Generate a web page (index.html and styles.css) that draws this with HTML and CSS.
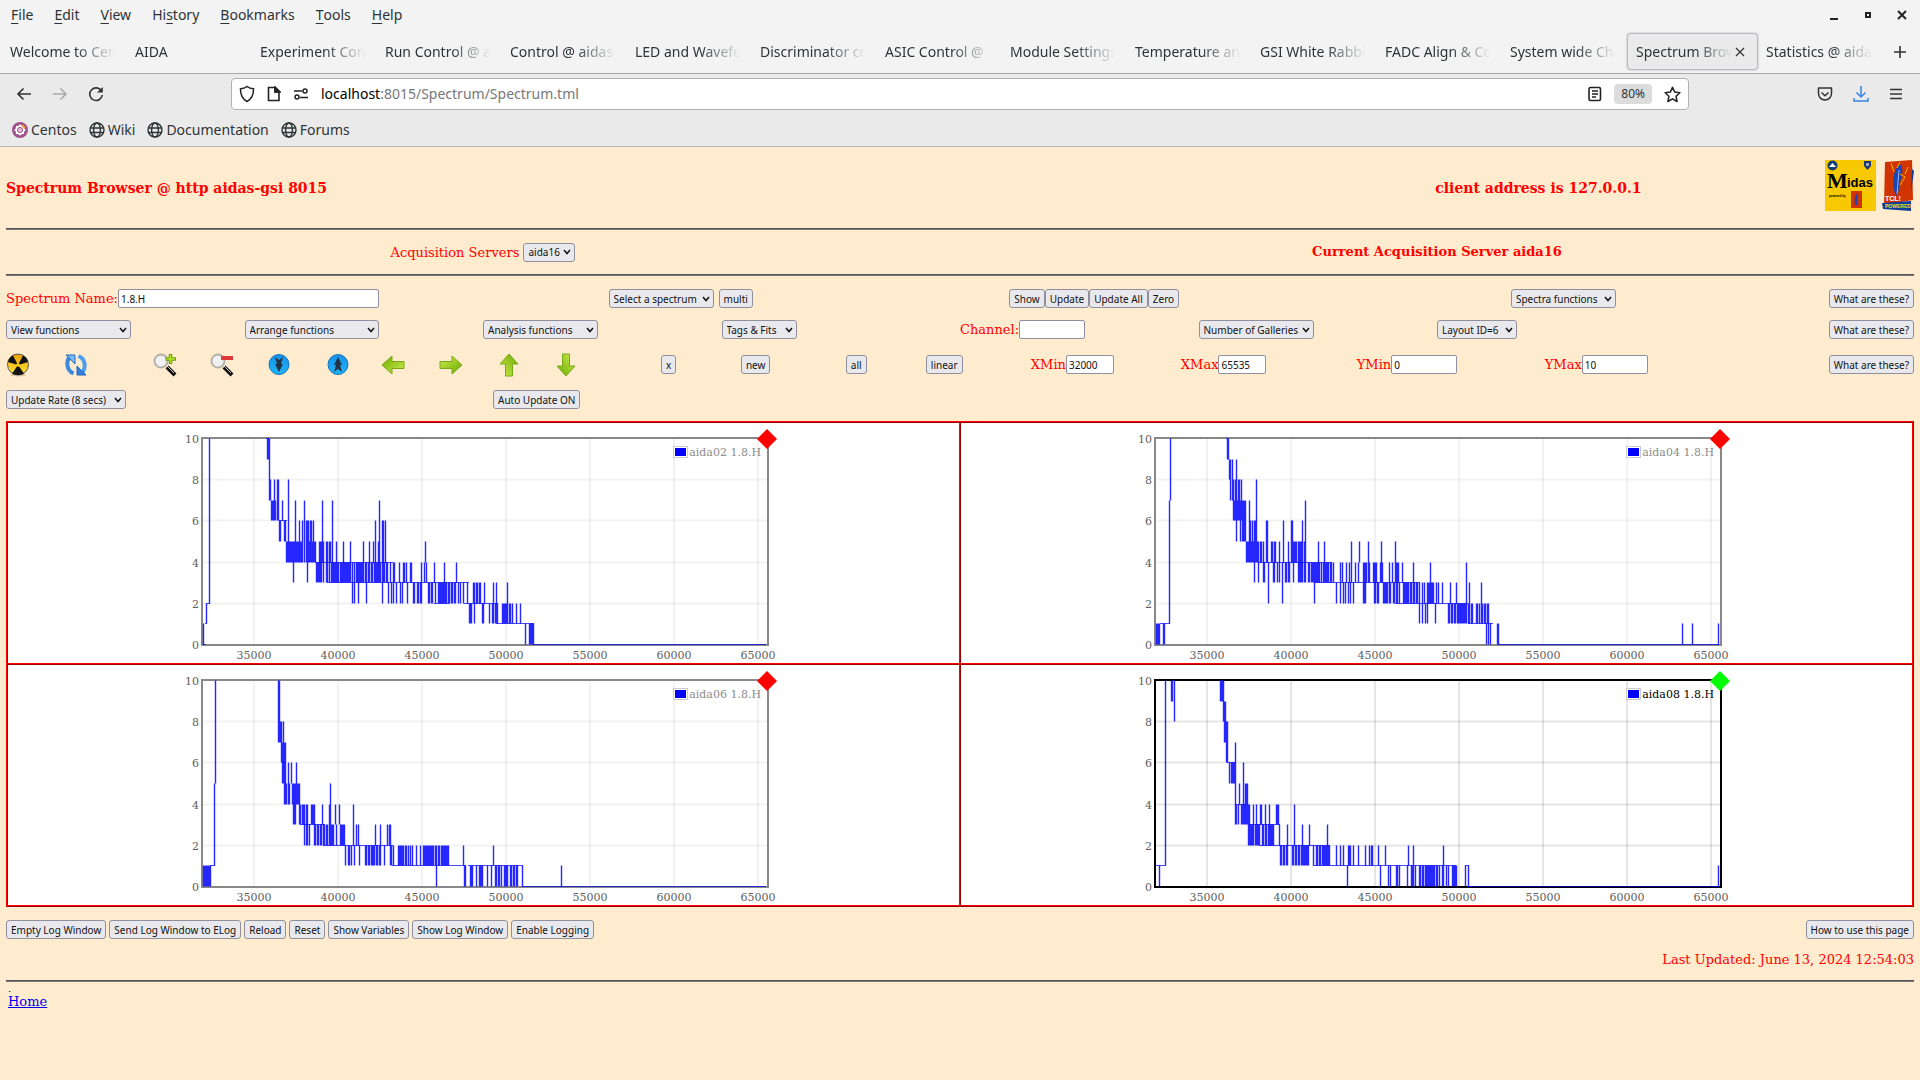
FILE: index.html
```html
<!DOCTYPE html>
<html lang="en">
<head>
<meta charset="utf-8">
<title>Spectrum Browser</title>
<link rel="stylesheet" href="styles.css">
</head>
<body>
<header class="chrome">
  <div class="menubar">
    <nav class="menus">
      <button><u>F</u>ile</button><button><u>E</u>dit</button><button><u>V</u>iew</button><button>Hi<u>s</u>tory</button><button><u>B</u>ookmarks</button><button><u>T</u>ools</button><button><u>H</u>elp</button>
    </nav>
    <div class="wincontrols">
      <button aria-label="Minimize"><svg width="10" height="10"><path d="M1 9h8" stroke="#222" stroke-width="2"/></svg></button>
      <button aria-label="Maximize"><svg width="10" height="10"><rect x="3" y="3" width="4" height="4" fill="none" stroke="#222" stroke-width="2"/></svg></button>
      <button aria-label="Close"><svg width="10" height="10"><path d="M1 1l8 8M9 1l-8 8" stroke="#222" stroke-width="2"/></svg></button>
    </div>
  </div>
  <div class="tabstrip">
    <div class="tabs">
      <button class="tab"><span>Welcome to Cen</span></button>
      <button class="tab"><span>AIDA</span></button>
      <button class="tab"><span>Experiment Cont</span></button>
      <button class="tab"><span>Run Control @ a</span></button>
      <button class="tab"><span>Control @ aidas-</span></button>
      <button class="tab"><span>LED and Wavefo</span></button>
      <button class="tab"><span>Discriminator co</span></button>
      <button class="tab"><span>ASIC Control @</span></button>
      <button class="tab"><span>Module Settings</span></button>
      <button class="tab"><span>Temperature and</span></button>
      <button class="tab"><span>GSI White Rabbi</span></button>
      <button class="tab"><span>FADC Align &amp; Co</span></button>
      <button class="tab"><span>System wide Che</span></button>
      <button class="tab active"><span>Spectrum Brow</span><svg width="10" height="10"><path d="M1 1l8 8M9 1l-8 8" stroke="#333" stroke-width="1.2"/></svg></button>
      <button class="tab"><span>Statistics @ aida</span></button>
    </div>
    <button class="newtab" aria-label="New tab"><svg width="14" height="14"><path d="M7 1v12M1 7h12" stroke="#333" stroke-width="1.6"/></svg></button>
  </div>
  <div class="toolbar">
    <div class="navbtns">
      <button aria-label="Back"><svg width="16" height="16" fill="none" stroke="#333" stroke-width="1.6"><path d="M15 8H2M7.500 2.500L2 8l5.500 5.500"/></svg></button>
      <button aria-label="Forward"><svg width="16" height="16" fill="none" stroke="#aaa" stroke-width="1.600"><path d="M1 8h13M8.500 2.500L14 8l-5.500 5.500"/></svg></button>
      <button aria-label="Reload"><svg width="16" height="16" fill="none" stroke="#333" stroke-width="1.6"><path d="M13.500 5A6.300 6.300 0 1 0 14.300 9"/><path d="M14.800 1v5.500H9z" fill="#333" stroke="none"/></svg></button>
    </div>
    <div class="urlbar">
      <svg width="16" height="18" fill="none" stroke="#222" stroke-width="1.5"><path d="M8 1.500C6 3 4 3.600 1.500 3.800 1.300 10 3.500 14 8 16.500 12.500 14 14.700 10 14.500 3.800 12 3.600 10 3 8 1.500z"/></svg>
      <svg width="14" height="16" fill="none" stroke="#222" stroke-width="1.600"><path d="M1.500 1.500h6.500l4 4v9H1.500zM8 1.500v4.500h4.500"/><path d="M8 1l5 5H8z" fill="#222"/></svg>
      <svg width="16" height="12" fill="none" stroke="#222" stroke-width="1.500"><path d="M1 3h8M7 9.500h8"/><circle cx="12" cy="3" r="2"/><circle cx="4" cy="9" r="2"/></svg>
      <span class="url"><b>localhost</b>:8015/Spectrum/Spectrum.tml</span>
      <svg width="14" height="16" fill="none" stroke="#222" stroke-width="1.600"><rect x="1" y="1.500" width="11.500" height="13" rx="1.500"/><path d="M4 5h6M4 8h6M4 11h4"/></svg>
      <button class="zoom">80%</button>
      <svg width="17" height="17" fill="none" stroke="#222" stroke-width="1.500"><path d="M8.500 1.200l2.200 4.900 5.200.6-3.900 3.500 1.100 5.300-4.600-2.700-4.600 2.700L5 10.200 1.100 6.700l5.200-.6z" stroke-linejoin="round"/></svg>
    </div>
    <div class="tools">
      <button aria-label="Pocket"><svg width="16" height="16" fill="none" stroke="#333" stroke-width="1.500"><path d="M1.500 2h13v5.500a6.500 6.500 0 0 1-13 0z" stroke-linejoin="round"/><path d="M4.500 6.500L8 9.800l3.500-3.300"/></svg></button>
      <button aria-label="Downloads"><svg width="16" height="18" fill="none" stroke="#3584e4" stroke-width="1.500"><path d="M8 1v11M3.500 7.500L8 12l4.500-4.500M1 13v3h14v-3"/></svg></button>
      <button aria-label="Menu"><svg width="14" height="12" stroke="#333" stroke-width="1.500"><path d="M1 1.500h12M1 6h12M1 10.500h12"/></svg></button>
    </div>
  </div>
  <nav class="bookmarks">
    <a href="#"><svg width="16" height="16"><circle cx="8" cy="8" r="8" fill="#a14f8c"/><g fill="none" stroke="#fff" stroke-width="1.200"><rect x="4.500" y="4.500" width="7" height="7"/><path d="M8 3l5 5-5 5-5-5z"/></g><circle cx="8" cy="8" r="2" fill="#e8c0de"/><path d="M10 3l3 3" stroke="#f0a030" stroke-width="2"/></svg>Centos</a>
    <a href="#"><svg class="globe" viewBox="0 0 16 16"><use href="#globe"/></svg>Wiki</a>
    <a href="#"><svg class="globe" viewBox="0 0 16 16"><use href="#globe"/></svg>Documentation</a>
    <a href="#"><svg class="globe" viewBox="0 0 16 16"><use href="#globe"/></svg>Forums</a>
  </nav>
</header>

<svg class="defs" width="0" height="0">
  <defs>
    <linearGradient id="green" x1="0" y1="0" x2="1" y2="1"><stop offset="0" stop-color="#d0ee50"/><stop offset="1" stop-color="#6aa800"/></linearGradient>
    <linearGradient id="blue" x1="0" y1="0" x2="0" y2="1"><stop offset="0" stop-color="#1690ea"/><stop offset="1" stop-color="#1fb4f6"/></linearGradient>
    <linearGradient id="yellow" x1="0" y1="0" x2="0" y2="1"><stop offset="0" stop-color="#f0a000"/><stop offset="1" stop-color="#ffe640"/></linearGradient>
    <g id="globe" fill="none" stroke="#2e3436" stroke-width="1.400"><circle cx="8" cy="8" r="7"/><ellipse cx="8" cy="8" rx="3.400" ry="7"/><path d="M1 6h14M1 10.500h14"/></g>
    <g id="lens"><path d="M14 14l8 8" stroke="#111" stroke-width="4"/><path d="M14 13l7 7" stroke="#ccc" stroke-width="1"/><circle cx="8" cy="8" r="6.500" fill="#eef0f2" stroke="#b4b0aa" stroke-width="2"/></g>
    <path id="arrow" d="M1 8.500h12V3l10 9-10 9v-5.500H1z" fill="url(#green)" stroke="#78a818"/>
    <g id="tcl"><path d="M4 2l27-2 1 40-29 5z" fill="#d03400"/><path d="M1 43l29-2v10l-28-2z" fill="#0c3c9c"/><path d="M31 9l2 2-3 22z" fill="#0c3c9c"/><path d="M15 36c-5-12-3-26 4-32 4 4 2 12 0 18-1 6-1 11-4 14z" fill="#1846b8"/><path d="M16 34l2-24" stroke="#9ab8f4"/><path d="M19 14l5 3-5 8M10 3l3 9M19 2l-3 6M27 7l-3 7" stroke="#f8b400" fill="none"/></g>
  </defs>
</svg>

<main>
  <div class="title">
    <h1>Spectrum Browser @ http aidas-gsi 8015</h1>
    <h1 class="client">client address is 127.0.0.1</h1>
    <div class="logos">
      <svg width="51" height="51"><rect width="51" height="51" fill="#f8c800"/><circle cx="7.500" cy="5.500" r="5" fill="#104070"/><path d="M4 7l3.500-4 3.500 4z" fill="#fff"/><path d="M39 1h7v5l-3.500 4L39 6z" fill="#203878"/><path d="M41 3h3v3h-3z" fill="#9ab"/><text x="2" y="28" class="m-big">M</text><text x="22" y="27" class="m-small">idas</text><text x="4" y="37" class="m-tiny">powered by</text><path d="M26 31h11v17H26z" fill="#d03400"/><path d="M30 45c-1-6 0-10 3-12l-1 12z" fill="#1846b8"/></svg>
      <svg width="33" height="51"><use href="#tcl"/><text x="4" y="41" class="t-tcl">TCL!</text><text x="4" y="48" class="t-pow">POWERED</text></svg>
    </div>
  </div>
  <hr>
  <div class="servers">
    <div><label for="srv">Acquisition Servers</label> <select id="srv"><option>aida16</option></select></div>
    <strong>Current Acquisition Server aida16</strong>
  </div>
  <hr>
  <div class="row row-name">
    <div class="field"><label for="sname">Spectrum Name:</label><input id="sname" class="w-name" value="1.8.H"></div>
    <div class="pair"><select aria-label="Spectrum" class="w-105"><option>Select a spectrum</option></select><button>multi</button></div>
    <div class="joined"><button>Show</button><button>Update</button><button>Update All</button><button>Zero</button></div>
    <div><select aria-label="Spectra functions" class="w-105"><option>Spectra functions</option></select></div>
    <div class="end"><button>What are these?</button></div>
  </div>
  <div class="row row-functions">
    <div><select aria-label="View" class="w-125"><option>View functions</option></select></div>
    <div><select aria-label="Arrange" class="w-134"><option>Arrange functions</option></select></div>
    <div><select aria-label="Analysis" class="w-115"><option>Analysis functions</option></select></div>
    <div><select aria-label="Tags"><option>Tags &amp; Fits</option></select></div>
    <div class="field"><label for="chan">Channel:</label><input id="chan" class="w-66"></div>
    <div><select aria-label="Galleries" class="w-115"><option>Number of Galleries</option></select></div>
    <div><select aria-label="Layout"><option>Layout ID=6</option></select></div>
    <div class="end"><button>What are these?</button></div>
  </div>
  <div class="row row-icons">
    <a href="#" aria-label="Radiation"><svg viewBox="0 0 24 24"><ellipse cx="12" cy="22" rx="8" ry="1.500" fill="#d8c29a"/><circle cx="12" cy="11.500" r="10.500" fill="url(#yellow)" stroke="#555"/><path d="M12 12L2 9Q3 4 7 2.500zM12 12l5-9.500q4 2 5 6.500zM12 12l6 8.500q-6 3-12 0z" fill="#111"/><circle cx="12" cy="12" r="1.800" fill="#fc0"/></svg></a>
    <a href="#" aria-label="Refresh"><svg viewBox="0 0 24 24"><path d="M9.500 20.500C2 17 2 8 6 4" fill="none" stroke="#3c8ae0" stroke-width="4"/><path d="M2 2h9v9z" fill="#78b8f8" stroke="#2468c0"/><path d="M14.500 3C22 6 22 15 18 20" fill="none" stroke="#4c9cf0" stroke-width="4"/><path d="M22 22h-9v-9z" fill="#3480dc" stroke="#2468c0"/></svg></a>
    <a href="#" aria-label="Zoom in"><svg viewBox="0 0 24 24"><use href="#lens"/><path d="M17.500 1v10M12.500 6h10.500" stroke="#6a9c10" stroke-width="3.500"/><path d="M17.500 2v8M13.500 6h8.500" stroke="#b8e828" stroke-width="1.500"/></svg></a>
    <a href="#" aria-label="Zoom out"><svg viewBox="0 0 24 24"><use href="#lens"/><path d="M11 5h12" stroke="#e03838" stroke-width="4"/></svg></a>
    <a href="#" aria-label="Scale down"><svg viewBox="0 0 24 24"><circle cx="12" cy="11.500" r="10" fill="url(#blue)" stroke="#1474c0"/><path d="M8 4l4 3 4-3-2 7h2l-4 8-4-8h2z" fill="#243444"/></svg></a>
    <a href="#" aria-label="Scale up"><svg viewBox="0 0 24 24"><circle cx="12" cy="11.500" r="10" fill="url(#blue)" stroke="#1474c0"/><path d="M12 4l4 8h-2l2 7-4-3-4 3 2-7H8z" fill="#243444"/></svg></a>
    <a href="#" aria-label="Left"><svg viewBox="0 0 24 24"><use href="#arrow" transform="rotate(180 12 12)"/></svg></a>
    <a href="#" aria-label="Right"><svg viewBox="0 0 24 24"><use href="#arrow"/></svg></a>
    <a href="#" aria-label="Up"><svg viewBox="0 0 24 24"><use href="#arrow" transform="rotate(-90 12 12)"/></svg></a>
    <a href="#" aria-label="Down"><svg viewBox="0 0 24 24"><use href="#arrow" transform="rotate(90 12 12)"/></svg></a>
    <div><button>x</button></div>
    <div><button>new</button></div>
    <div><button>all</button></div>
    <div><button>linear</button></div>
    <div class="field"><label for="xmin">XMin</label><input id="xmin" class="w-48" value="32000"></div>
    <div class="field"><label for="xmax">XMax</label><input id="xmax" class="w-48" value="65535"></div>
    <div class="field"><label for="ymin">YMin</label><input id="ymin" class="w-66" value="0"></div>
    <div class="field"><label for="ymax">YMax</label><input id="ymax" class="w-66" value="10"></div>
    <div class="end"><button>What are these?</button></div>
  </div>
  <div class="row row-rate">
    <div><select aria-label="Update rate" class="w-120"><option>Update Rate (8 secs)</option></select></div>
    <div><button>Auto Update ON</button></div>
  </div>

  <section class="gallery" id="gallery"></section>

  <div class="row actions">
    <button>Empty Log Window</button><button>Send Log Window to ELog</button><button>Reload</button><button>Reset</button><button>Show Variables</button><button>Show Log Window</button><button>Enable Logging</button>
    <button class="push">How to use this page</button>
  </div>
  <p class="updated">Last Updated: June 13, 2024 12:54:03</p>
  <hr>
  <footer><small>.</small><a href="#">Home</a></footer>
</main>
<script src="charts.js"></script>
</body>
</html>
```
FILE: styles.css
```css
* { box-sizing: border-box; }
body { margin: 0; min-height: 100vh; background: #ffebcd; color: #f00; font: 13px/16px "DejaVu Serif", serif; }
button, input, select { font: 10px/14px "Noto Sans", sans-serif; color: #111; margin: 0; }

.chrome, .chrome button { font: 14px/20px "Noto Sans", sans-serif; color: #2e3436; }
.chrome { background: #f3f3f3; border-bottom: 1px solid #b4b4b4; }
.chrome button { border: 0; background: none; padding: 0; display: flex; align-items: center; }
.menubar { display: flex; justify-content: space-between; align-items: center; height: 31px; padding: 0 13px 2px 11px; }
.menus { display: flex; gap: 21px; }
.menus u { text-underline-offset: 3px; }
.wincontrols { display: flex; gap: 24px; }
.tabstrip { display: flex; height: 43px; padding-left: 2px; border-bottom: 1px solid #a8a8a8; }
.tabs { display: flex; flex: 1; min-width: 0; padding: 2px 0 3px; }
.tabs .tab { flex: 1; min-width: 0; padding: 0 8px; border-radius: 4px; }
.tab span { flex: 1; text-align: left; white-space: nowrap; overflow: hidden; mask-image: linear-gradient(to right, #000 60%, transparent 97%); }
.tabs .active { padding-right: 12px; background: #eaeaea; border: 1px solid #bbb8c4; box-shadow: 0 0 2px #aaa; }
.chrome .newtab { width: 37px; justify-content: center; padding-right: 3px; }
.toolbar { display: flex; align-items: center; height: 40px; background: #eaeaea; }
.navbtns { display: flex; gap: 20px; width: 231px; padding-left: 16px; }
.urlbar { flex: 1; display: flex; align-items: center; height: 32px; padding: 0 7px; gap: 12px; background: #fff; border: 1px solid #b0b0b0; border-radius: 4px; }
.url { flex: 1; color: #777; }
.url b { font-weight: 400; color: #000; }
.urlbar .zoom { font-size: 12px; background: #dcdcdc; border-radius: 4px; padding: 0 7px; }
.tools { display: flex; align-items: center; justify-content: flex-end; gap: 20px; width: 231px; padding-right: 17px; }
.bookmarks { display: flex; align-items: center; gap: 12px; height: 32px; padding: 0 12px; background: #eaeaea; }
.bookmarks a { display: flex; align-items: center; gap: 3px; color: #2e3436; text-decoration: none; }
.globe { width: 16px; height: 16px; }
.defs { position: absolute; }

main { padding: 0 6px; }
.title { display: grid; grid-template-columns: 17fr 7fr 114px; align-items: center; height: 81px; }
h1 { margin: 0; font-size: 14px; line-height: 18px; }
.client { text-align: center; }
.logos { display: flex; justify-content: flex-end; gap: 5px; padding-bottom: 5px; }
.m-big { font: bold 22px "Liberation Serif", serif; }
.m-small { font: bold 13px "Liberation Sans", sans-serif; }
.m-tiny { font: bold 3px "Liberation Sans", sans-serif; }
.t-tcl { font: bold 7px "Liberation Sans", sans-serif; fill: #fff; }
.t-pow { font: bold 5px "Liberation Sans", sans-serif; fill: #f8e020; }
hr { margin: 0; border: 0; height: 2px; background: #55555a; border-bottom: 1px solid #77777a; }
.servers { display: grid; grid-template-columns: 1fr 1fr; align-items: center; text-align: center; height: 44px; }

main button, main input, select { height: 19px; border: 1px solid #8f8f9d; }
main button, select { background-color: #e9e9ed; border-radius: 3px; white-space: nowrap; padding: 0 4px; }
main input { background: #fff; border-radius: 2px; padding: 0 2px; }
select { appearance: none; padding-right: 14px; background: #e9e9ed url("data:image/svg+xml,%3Csvg xmlns='http://www.w3.org/2000/svg' width='8' height='6'%3E%3Cpath d='M1 1l3 3.500 3-3.500' fill='none' stroke='%23111' stroke-width='1.500'/%3E%3C/svg%3E") no-repeat right 3px center; }
.row { display: grid; align-items: center; margin-top: 16px; }
.row > div { white-space: nowrap; }
.row > .end { justify-self: end; }
.field, .joined, .pair { display: flex; align-items: center; }
.pair { gap: 5px; }
.row-name { grid-template-columns: 603fr 401fr 502fr 318fr 84fr; margin-top: 13px; }
.row-functions { grid-template-columns: repeat(8, minmax(0, 1fr)); margin-top: 12px; }
.row-icons { grid-template-columns: 58fr 89fr 57fr 57fr 59fr 55fr 58fr 58fr 57fr 107fr 80fr 105fr 80fr 105fr 150fr 176fr 188fr 284fr 85fr; grid-template-rows: 19px; }
.row-icons svg { display: block; width: 24px; height: 24px; }
.row-rate { grid-template-columns: 487fr 1421fr; }
#srv { width: 52px; }
[aria-label="Tags"] { width: 75px; }
[aria-label="Layout"] { width: 80px; }
.w-name { width: 261px; }
.w-48 { width: 48px; }
.w-66 { width: 66px; }
.w-105 { width: 105px; }
.w-115 { width: 115px; }
.w-120 { width: 120px; }
.w-125 { width: 125px; }
.w-134 { width: 134px; }

.gallery { display: grid; grid-template-columns: 1fr 1fr; margin-top: 12px; background: #fff; border: 1px solid; border-color: #f00 #a00000 #a00000 #f00; }
.cell { display: flex; justify-content: center; border: 1px solid; border-color: #a00000 #f00 #f00 #a00000; }
.cell svg { display: block; overflow: visible; }
.cell text { font-size: 11px; fill: #606060; }
.ylabel { text-anchor: end; }
.xlabel { text-anchor: middle; }
.cell .legend { fill: #8c8c8c; text-anchor: end; }
.cell .legend.current { fill: #000; }
.grid { stroke: #000; stroke-opacity: .05; stroke-width: 2; fill: none; }
.grid.current { stroke-opacity: .1; }
.frame { stroke: #888; stroke-width: 2; fill: none; }
.frame.current { stroke: #000; }
.flat { stroke: #00f; stroke-opacity: .7; fill: none; }
.bars { stroke: #00f; stroke-opacity: .85; stroke-width: 1.4; fill: none; }

.actions { display: flex; gap: 3px; margin-top: 13px; }
.push { margin-left: auto; }
.updated { margin: 13px 0 12px; text-align: right; }
footer { padding: 2px 2px 0; }
footer small { display: block; height: 10px; font-size: 10px; line-height: 10px; color: #000; }
footer a { color: #00e; }
```
FILE: charts.js
```js
// Histograms: pixel offsets from the plot's left edge, grouped by the count range they span.
// "a-b" is a busy stretch, "a=b" a solid one, "a" a single column; keys "h<n>" are flat runs at a count.
const charts = [
  { name: 'aida02', current: false, d: {
    '0-1': '1 323 327=331', '1-2': '4 267=269 280=281 287 290-294 295 300=303 304-308 310 314 318',
    '1-3': '272', '2-5': '7', '5-10': '7', '9-10': '65=67', '7-9': '67', '7-8': '68', '6-7': '69=73 80', '6-8': '72 75 76',
    '5-6': '77=78 82=83', '4-5': '84=88 89=99 104=113 124 125 127 128', '4-8': '86', '4-7': '93 102 120 130 177', '3-5': '91 117=119 121',
    '4-6': '97 100 104=106 108 109 111 173 181 183', '3-4': '105 114=117 124-127 129=136 138=146 147-150 154=161 163-172 173=178 181-185 188 191 192 197 201-204 208=209 219 222 224 232 242 254',
    '4-5b': '134 141 148 161 167 171 176 223', '2-4': '150 152 156 164 180', '3-6': '180',
    '2-3': '186 189 191 194 198 200 205 211 212 215-219 226-231 233 236=244 246-254 256 258 261 265 271-278 282 291 294 305',
    h10: '64-66', h6: '77-84', h4: '113-190', h3: '125-266', h2: '4-7 232-246 262-295', h1: '3-4 294-331', h0: '1-3 331-563' } },
  { name: 'aida04', current: false, d: {
    '0-1': '1=4 8=9 331 333 335 342=343 527 537 563', '1-3': '14 264 267', '3-7': '14', '7-10': '15', '9-10': '72=73', '8-9': '74', '7-9': '75 77',
    '6-8': '78 80 83 84 86', '6-7': '78=82', '5-9': '81', '5-7': '85 87=90', '4-5': '91=93 95=100 102-108 116-120 124 133 138=141 163 169 196 204',
    '4-7': '94 150', '4-6': '95 97 100 111=112 128 136=137 147', '3-6': '99', '4-8': '101', '3-5': '103 143=145 146-150 213 226 240',
    '3-4': '108=109 118 119 122 124 130-135 138 153-157 158=162 163-166 168=171 172-176 178 185 187 191 194 196 200 203 208=211 214 218=221 225 227 234 237 240=243 247 258 275',
    '2-4': '113 127 159 311', '2-3': '181 185 188 190 193 195 198 208=210 219-224 228=230 231-236 238-244 248=253 255-263 269 272=278 281 283 287 295 301 314 326',
    '1-2': '270 272 280 293-303 304=311 313-318 321-324 326-333',
    h10: '71-72', h4: '103-176', h3: '160-264', h2: '240-312', h1: '5-14 313-337', h0: '343-563' } },
  { name: 'aida06', current: false, d: {
    '0-1': '1=8 234 262=263 268=270 274 277=280 285 289 293-299 302=305 308-316 320 359', '1-5': '12', '5-10': '13', '7-10': '76=77', '7-8': '78', '6-8': '79 81', '5-7': '80=82',
    '4-7': '82=83', '4-6': '86 94', '5-6': '89', '4-5': '84 87 90 94=97', '3-5': '91=93 128', '3-4': '97-102 104=105 109=112 120 127 133 137',
    '2-4': '102 104 151', '2-3': '105 107 112-119 121-126 127=131 134 138=142 154 156 173 178 185 187=188',
    '1-2': '143 146=147 149 152 157 163-168 169=172 174-178 182 188-191 196=199 200-204 206 208 210 214 218 221=231 233-240 241=246 261 291',
    h6: '80-82', h3: '98-122', h2: '121-190', h1: '8-12 190-263 266-320', h0: '320-563' } },
  { name: 'aida08', current: true, d: {
    '0-1': '4 192 225 233 235 241=242 244 252 256=258 260 264-270 271=277 278-284 287=288 291 293 297=301 310 313 563', '1-10': '10', '9-10': '16=17 19 65=68', '8-10': '19',
    '8-9': '68=70', '7-8': '69=71', '6-8': '71=72', '5-6': '74 76=79', '4-7': '80', '3-5': '80 90=92', '3-4': '81 83 86=89 98 101 105=106 110 114 121=123',
    '4-5': '84', '4-6': '88', '2-4': '93 94 139', '2-3': '95=98 100=104 107-113 114=118 124 132 147 154 172',
    '1-2': '125-133 137-146 147=149 150=153 158 161-167 168=174 181 185 188 193=195 198 203 210 214 216 217 223 230 253 258 288',
    h6: '72-79', h4: '80-90', h3: '94-124', h2: '104-174', h1: '1-10 158-300 310-313', h0: '313-563' } },
];

const LEFT = 18, TOP = 15, ZERO = 221, UNIT = 20.6;
const y = v => Math.round(ZERO - v * UNIT) + 0.5;

function paths(data) {
  let flat = '', bars = '';
  for (const [key, list] of Object.entries(data)) {
    for (const item of list.split(' ')) {
      const [a, b = a] = item.split(/[-=]/).map(Number);
      if (key[0] === 'h') {
        flat += `M${LEFT + a} ${y(+key.slice(1))}H${LEFT + b + 1}`;
        continue;
      }
      const [lo, hi] = key.split('-').map(parseFloat);
      for (let x = a; x <= b; x++) {
        if (item.includes('-') && (x - a) % 3 === 2) continue;
        bars += `M${LEFT + x + 0.5} ${y(lo)}V${y(hi)}`;
      }
    }
  }
  return `<path class="flat" d="${flat}"/><path class="bars" d="${bars}"/>`;
}

document.getElementById('gallery').innerHTML = charts.map(c => {
  const mark = c.current ? ' current' : '';
  const xs = [35, 40, 45, 50, 55, 60, 65].map((k, i) => [k * 1000, 70 + i * 84]);
  const ys = [0, 2, 4, 6, 8, 10];
  return `<div class="cell"><svg width="600" height="240">
    <path class="grid${mark}" d="${xs.map(p => `M${p[1]} ${TOP}V${ZERO}`).join('')}"/>
    <path class="grid${mark}" d="${[2, 4, 6, 8].map(v => `M19 ${y(v)}H583`).join('')}"/>
    <rect class="frame${mark}" x="18" y="${TOP}" width="566" height="207"/>
    ${paths(c.d)}
    ${ys.map(v => `<text class="ylabel" x="15" y="${Math.round(y(v)) + 4}">${v}</text>`).join('')}
    ${xs.map(p => `<text class="xlabel" x="${p[1]}" y="236">${p[0]}</text>`).join('')}
    <rect x="489.5" y="23.5" width="14" height="11" fill="#fff" stroke="#ccc"/>
    <rect x="491" y="25" width="11" height="8" fill="#00f"/>
    <text class="legend${mark}" x="577" y="33">${c.name} 1.8.H</text>
    <path d="M583 6l10 10-10 10-10-10z" fill="${c.current ? '#0f0' : '#f00'}"/>
  </svg></div>`;
}).join('');
```
